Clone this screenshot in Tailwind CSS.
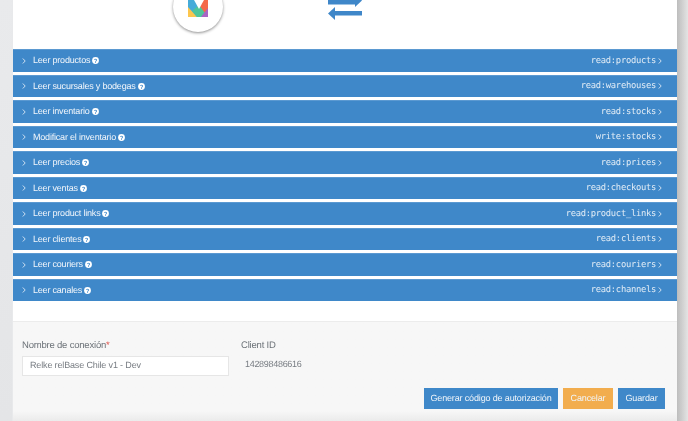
<!DOCTYPE html>
<html>
<head>
<meta charset="utf-8">
<script src="https://cdn.jsdelivr.net/npm/@tailwindcss/browser@4"></script>
</head>
<body class="m-0 overflow-hidden bg-[#e8e9eb]">
<div class="w-[688px] h-[421px] bg-[#e8e9eb] font-['Liberation_Sans',sans-serif] [text-rendering:geometricPrecision] relative overflow-hidden blur-[0.4px]">
  <div class="absolute top-0 right-0 w-[11px] h-full bg-gradient-to-r from-[#bdbdbd] to-[#e4e4e4]"></div>
  <div class="absolute top-0 left-0 w-[12px] h-full bg-gradient-to-b from-[#e9eaec] to-[#e4e5e7]"></div>
  <div class="absolute left-[13px] top-0 w-[664px] h-[421px] flex flex-col">
    <div class="bg-white h-[322px] flex flex-col border-b border-[#ececec]">
      <div class="h-[49px] relative overflow-hidden shrink-0">
        <div class="absolute left-[160px] top-[-18px] w-[50px] h-[50px] rounded-full bg-white shadow-[0_1px_3px_rgba(0,0,0,0.45)]">
          <svg class="absolute left-[15px] top-[18px]" width="20" height="17" viewBox="0 0 20 17">
            <polygon points="0,0 20,0 20,17 0,17" fill="#45abd9"/>
            <polygon points="11,9 14,0 20,0 20,10 15,14" fill="#f4694a"/>
            <polygon points="0,7 9,17 0,17" fill="#fcc64d"/>
            <polygon points="4,11 11,5 17,13 13,17 9,17" fill="#4fc59a"/>
            <polygon points="20,8 20,17 13,17" fill="#a965c4"/>
            <polygon points="6,0 11,9 16,0" fill="#ffffff"/>
          </svg>
        </div>
        <svg class="absolute left-[315px] top-0" width="34" height="21" viewBox="0 0 34 21" fill="#3f87c9">
          <rect x="0" y="0" width="27" height="4.5"/>
          <polygon points="27,-6 34,0.5 27,7"/>
          <rect x="7" y="11" width="27" height="4.5"/>
          <polygon points="7,7 0,13.5 7,20"/>
        </svg>
      </div>
      <div class="flex flex-col gap-[3px] text-[9px] tracking-[-0.2px]">
        <div class="h-[22.5px] bg-[#3f88c9] flex items-center pl-[9px] pr-[15px] border-t border-[#5b99d1]">
          <svg width="4" height="6" viewBox="0 0 4 6" fill="none" stroke="#dce9f5" stroke-width="0.9"><path d="M0.8 0.5 3.2 3 0.8 5.5"/></svg>
          <span class="ml-[7px] text-[#f2f6fb]">Leer productos</span>
          <svg class="ml-[2px]" width="7" height="7" viewBox="0 0 7 7"><circle cx="3.5" cy="3.5" r="3.4" fill="#fff"/><text x="3.5" y="5.7" font-size="6" font-weight="700" text-anchor="middle" fill="#3f88c9" font-family="Liberation Sans">?</text></svg>
          <span class="ml-auto pt-[1px] font-['DejaVu_Sans_Mono',monospace] text-[8.8px] tracking-[-0.28px] text-[#e3edf6]">read:products</span>
          <svg class="ml-[2px]" width="4" height="6" viewBox="0 0 4 6" fill="none" stroke="#dce9f5" stroke-width="0.9"><path d="M0.8 0.5 3.2 3 0.8 5.5"/></svg>
        </div>
        <div class="h-[22.5px] bg-[#3f88c9] flex items-center pl-[9px] pr-[15px] border-t border-[#5b99d1]">
          <svg width="4" height="6" viewBox="0 0 4 6" fill="none" stroke="#dce9f5" stroke-width="0.9"><path d="M0.8 0.5 3.2 3 0.8 5.5"/></svg>
          <span class="ml-[7px] text-[#f2f6fb]">Leer sucursales y bodegas</span>
          <svg class="ml-[2px]" width="7" height="7" viewBox="0 0 7 7"><circle cx="3.5" cy="3.5" r="3.4" fill="#fff"/><text x="3.5" y="5.7" font-size="6" font-weight="700" text-anchor="middle" fill="#3f88c9" font-family="Liberation Sans">?</text></svg>
          <span class="ml-auto pt-[1px] font-['DejaVu_Sans_Mono',monospace] text-[8.8px] tracking-[-0.28px] text-[#e3edf6]">read:warehouses</span>
          <svg class="ml-[2px]" width="4" height="6" viewBox="0 0 4 6" fill="none" stroke="#dce9f5" stroke-width="0.9"><path d="M0.8 0.5 3.2 3 0.8 5.5"/></svg>
        </div>
        <div class="h-[22.5px] bg-[#3f88c9] flex items-center pl-[9px] pr-[15px] border-t border-[#5b99d1]">
          <svg width="4" height="6" viewBox="0 0 4 6" fill="none" stroke="#dce9f5" stroke-width="0.9"><path d="M0.8 0.5 3.2 3 0.8 5.5"/></svg>
          <span class="ml-[7px] text-[#f2f6fb]">Leer inventario</span>
          <svg class="ml-[2px]" width="7" height="7" viewBox="0 0 7 7"><circle cx="3.5" cy="3.5" r="3.4" fill="#fff"/><text x="3.5" y="5.7" font-size="6" font-weight="700" text-anchor="middle" fill="#3f88c9" font-family="Liberation Sans">?</text></svg>
          <span class="ml-auto pt-[1px] font-['DejaVu_Sans_Mono',monospace] text-[8.8px] tracking-[-0.28px] text-[#e3edf6]">read:stocks</span>
          <svg class="ml-[2px]" width="4" height="6" viewBox="0 0 4 6" fill="none" stroke="#dce9f5" stroke-width="0.9"><path d="M0.8 0.5 3.2 3 0.8 5.5"/></svg>
        </div>
        <div class="h-[22.5px] bg-[#3f88c9] flex items-center pl-[9px] pr-[15px] border-t border-[#5b99d1]">
          <svg width="4" height="6" viewBox="0 0 4 6" fill="none" stroke="#dce9f5" stroke-width="0.9"><path d="M0.8 0.5 3.2 3 0.8 5.5"/></svg>
          <span class="ml-[7px] text-[#f2f6fb]">Modificar el inventario</span>
          <svg class="ml-[2px]" width="7" height="7" viewBox="0 0 7 7"><circle cx="3.5" cy="3.5" r="3.4" fill="#fff"/><text x="3.5" y="5.7" font-size="6" font-weight="700" text-anchor="middle" fill="#3f88c9" font-family="Liberation Sans">?</text></svg>
          <span class="ml-auto pt-[1px] font-['DejaVu_Sans_Mono',monospace] text-[8.8px] tracking-[-0.28px] text-[#e3edf6]">write:stocks</span>
          <svg class="ml-[2px]" width="4" height="6" viewBox="0 0 4 6" fill="none" stroke="#dce9f5" stroke-width="0.9"><path d="M0.8 0.5 3.2 3 0.8 5.5"/></svg>
        </div>
        <div class="h-[22.5px] bg-[#3f88c9] flex items-center pl-[9px] pr-[15px] border-t border-[#5b99d1]">
          <svg width="4" height="6" viewBox="0 0 4 6" fill="none" stroke="#dce9f5" stroke-width="0.9"><path d="M0.8 0.5 3.2 3 0.8 5.5"/></svg>
          <span class="ml-[7px] text-[#f2f6fb]">Leer precios</span>
          <svg class="ml-[2px]" width="7" height="7" viewBox="0 0 7 7"><circle cx="3.5" cy="3.5" r="3.4" fill="#fff"/><text x="3.5" y="5.7" font-size="6" font-weight="700" text-anchor="middle" fill="#3f88c9" font-family="Liberation Sans">?</text></svg>
          <span class="ml-auto pt-[1px] font-['DejaVu_Sans_Mono',monospace] text-[8.8px] tracking-[-0.28px] text-[#e3edf6]">read:prices</span>
          <svg class="ml-[2px]" width="4" height="6" viewBox="0 0 4 6" fill="none" stroke="#dce9f5" stroke-width="0.9"><path d="M0.8 0.5 3.2 3 0.8 5.5"/></svg>
        </div>
        <div class="h-[22.5px] bg-[#3f88c9] flex items-center pl-[9px] pr-[15px] border-t border-[#5b99d1]">
          <svg width="4" height="6" viewBox="0 0 4 6" fill="none" stroke="#dce9f5" stroke-width="0.9"><path d="M0.8 0.5 3.2 3 0.8 5.5"/></svg>
          <span class="ml-[7px] text-[#f2f6fb]">Leer ventas</span>
          <svg class="ml-[2px]" width="7" height="7" viewBox="0 0 7 7"><circle cx="3.5" cy="3.5" r="3.4" fill="#fff"/><text x="3.5" y="5.7" font-size="6" font-weight="700" text-anchor="middle" fill="#3f88c9" font-family="Liberation Sans">?</text></svg>
          <span class="ml-auto pt-[1px] font-['DejaVu_Sans_Mono',monospace] text-[8.8px] tracking-[-0.28px] text-[#e3edf6]">read:checkouts</span>
          <svg class="ml-[2px]" width="4" height="6" viewBox="0 0 4 6" fill="none" stroke="#dce9f5" stroke-width="0.9"><path d="M0.8 0.5 3.2 3 0.8 5.5"/></svg>
        </div>
        <div class="h-[22.5px] bg-[#3f88c9] flex items-center pl-[9px] pr-[15px] border-t border-[#5b99d1]">
          <svg width="4" height="6" viewBox="0 0 4 6" fill="none" stroke="#dce9f5" stroke-width="0.9"><path d="M0.8 0.5 3.2 3 0.8 5.5"/></svg>
          <span class="ml-[7px] text-[#f2f6fb]">Leer product links</span>
          <svg class="ml-[2px]" width="7" height="7" viewBox="0 0 7 7"><circle cx="3.5" cy="3.5" r="3.4" fill="#fff"/><text x="3.5" y="5.7" font-size="6" font-weight="700" text-anchor="middle" fill="#3f88c9" font-family="Liberation Sans">?</text></svg>
          <span class="ml-auto pt-[1px] font-['DejaVu_Sans_Mono',monospace] text-[8.8px] tracking-[-0.28px] text-[#e3edf6]">read:product_links</span>
          <svg class="ml-[2px]" width="4" height="6" viewBox="0 0 4 6" fill="none" stroke="#dce9f5" stroke-width="0.9"><path d="M0.8 0.5 3.2 3 0.8 5.5"/></svg>
        </div>
        <div class="h-[22.5px] bg-[#3f88c9] flex items-center pl-[9px] pr-[15px] border-t border-[#5b99d1]">
          <svg width="4" height="6" viewBox="0 0 4 6" fill="none" stroke="#dce9f5" stroke-width="0.9"><path d="M0.8 0.5 3.2 3 0.8 5.5"/></svg>
          <span class="ml-[7px] text-[#f2f6fb]">Leer clientes</span>
          <svg class="ml-[2px]" width="7" height="7" viewBox="0 0 7 7"><circle cx="3.5" cy="3.5" r="3.4" fill="#fff"/><text x="3.5" y="5.7" font-size="6" font-weight="700" text-anchor="middle" fill="#3f88c9" font-family="Liberation Sans">?</text></svg>
          <span class="ml-auto pt-[1px] font-['DejaVu_Sans_Mono',monospace] text-[8.8px] tracking-[-0.28px] text-[#e3edf6]">read:clients</span>
          <svg class="ml-[2px]" width="4" height="6" viewBox="0 0 4 6" fill="none" stroke="#dce9f5" stroke-width="0.9"><path d="M0.8 0.5 3.2 3 0.8 5.5"/></svg>
        </div>
        <div class="h-[22.5px] bg-[#3f88c9] flex items-center pl-[9px] pr-[15px] border-t border-[#5b99d1]">
          <svg width="4" height="6" viewBox="0 0 4 6" fill="none" stroke="#dce9f5" stroke-width="0.9"><path d="M0.8 0.5 3.2 3 0.8 5.5"/></svg>
          <span class="ml-[7px] text-[#f2f6fb]">Leer couriers</span>
          <svg class="ml-[2px]" width="7" height="7" viewBox="0 0 7 7"><circle cx="3.5" cy="3.5" r="3.4" fill="#fff"/><text x="3.5" y="5.7" font-size="6" font-weight="700" text-anchor="middle" fill="#3f88c9" font-family="Liberation Sans">?</text></svg>
          <span class="ml-auto pt-[1px] font-['DejaVu_Sans_Mono',monospace] text-[8.8px] tracking-[-0.28px] text-[#e3edf6]">read:couriers</span>
          <svg class="ml-[2px]" width="4" height="6" viewBox="0 0 4 6" fill="none" stroke="#dce9f5" stroke-width="0.9"><path d="M0.8 0.5 3.2 3 0.8 5.5"/></svg>
        </div>
        <div class="h-[22.5px] bg-[#3f88c9] flex items-center pl-[9px] pr-[15px] border-t border-[#5b99d1]">
          <svg width="4" height="6" viewBox="0 0 4 6" fill="none" stroke="#dce9f5" stroke-width="0.9"><path d="M0.8 0.5 3.2 3 0.8 5.5"/></svg>
          <span class="ml-[7px] text-[#f2f6fb]">Leer canales</span>
          <svg class="ml-[2px]" width="7" height="7" viewBox="0 0 7 7"><circle cx="3.5" cy="3.5" r="3.4" fill="#fff"/><text x="3.5" y="5.7" font-size="6" font-weight="700" text-anchor="middle" fill="#3f88c9" font-family="Liberation Sans">?</text></svg>
          <span class="ml-auto pt-[1px] font-['DejaVu_Sans_Mono',monospace] text-[8.8px] tracking-[-0.28px] text-[#e3edf6]">read:channels</span>
          <svg class="ml-[2px]" width="4" height="6" viewBox="0 0 4 6" fill="none" stroke="#dce9f5" stroke-width="0.9"><path d="M0.8 0.5 3.2 3 0.8 5.5"/></svg>
        </div>
      </div>
    </div>
    <div class="flex-1 bg-gradient-to-b from-[#f7f7f7] from-90% to-[#ebebeb] pl-[9px] pr-[12px] pt-[17px] flex flex-col">
      <div class="flex">
        <div class="w-[207px]">
          <div class="text-[9.5px] tracking-[-0.2px] leading-[14px] text-[#6d7379]">Nombre de conexión<span class="text-[#e0524a]">*</span></div>
          <div class="mt-[3px] h-[20px] bg-white border border-[#e6e6e6] pl-[7px] flex items-center text-[9px] tracking-[-0.15px] text-[#777c82]">Relke relBase Chile v1 - Dev</div>
        </div>
        <div class="ml-[12px]">
          <div class="text-[9.5px] tracking-[-0.2px] leading-[14px] text-[#6d7379]">Client ID</div>
          <div class="mt-[5px] ml-[4px] text-[9px] tracking-[-0.3px] leading-[12px] text-[#777c82]">142898486616</div>
        </div>
      </div>
      <div class="mt-[12px] flex justify-end gap-[5px] text-[9px] tracking-[-0.15px] text-[#f0f5fa]">
        <div class="w-[134px] h-[21px] bg-[#3f88c9] flex items-center justify-center">Generar código de autorización</div>
        <div class="w-[50px] h-[21px] bg-[#f2ad4e] flex items-center justify-center">Cancelar</div>
        <div class="w-[47px] h-[21px] bg-[#3f88c9] flex items-center justify-center">Guardar</div>
      </div>
    </div>
  </div>
</div>
</body>
</html>
